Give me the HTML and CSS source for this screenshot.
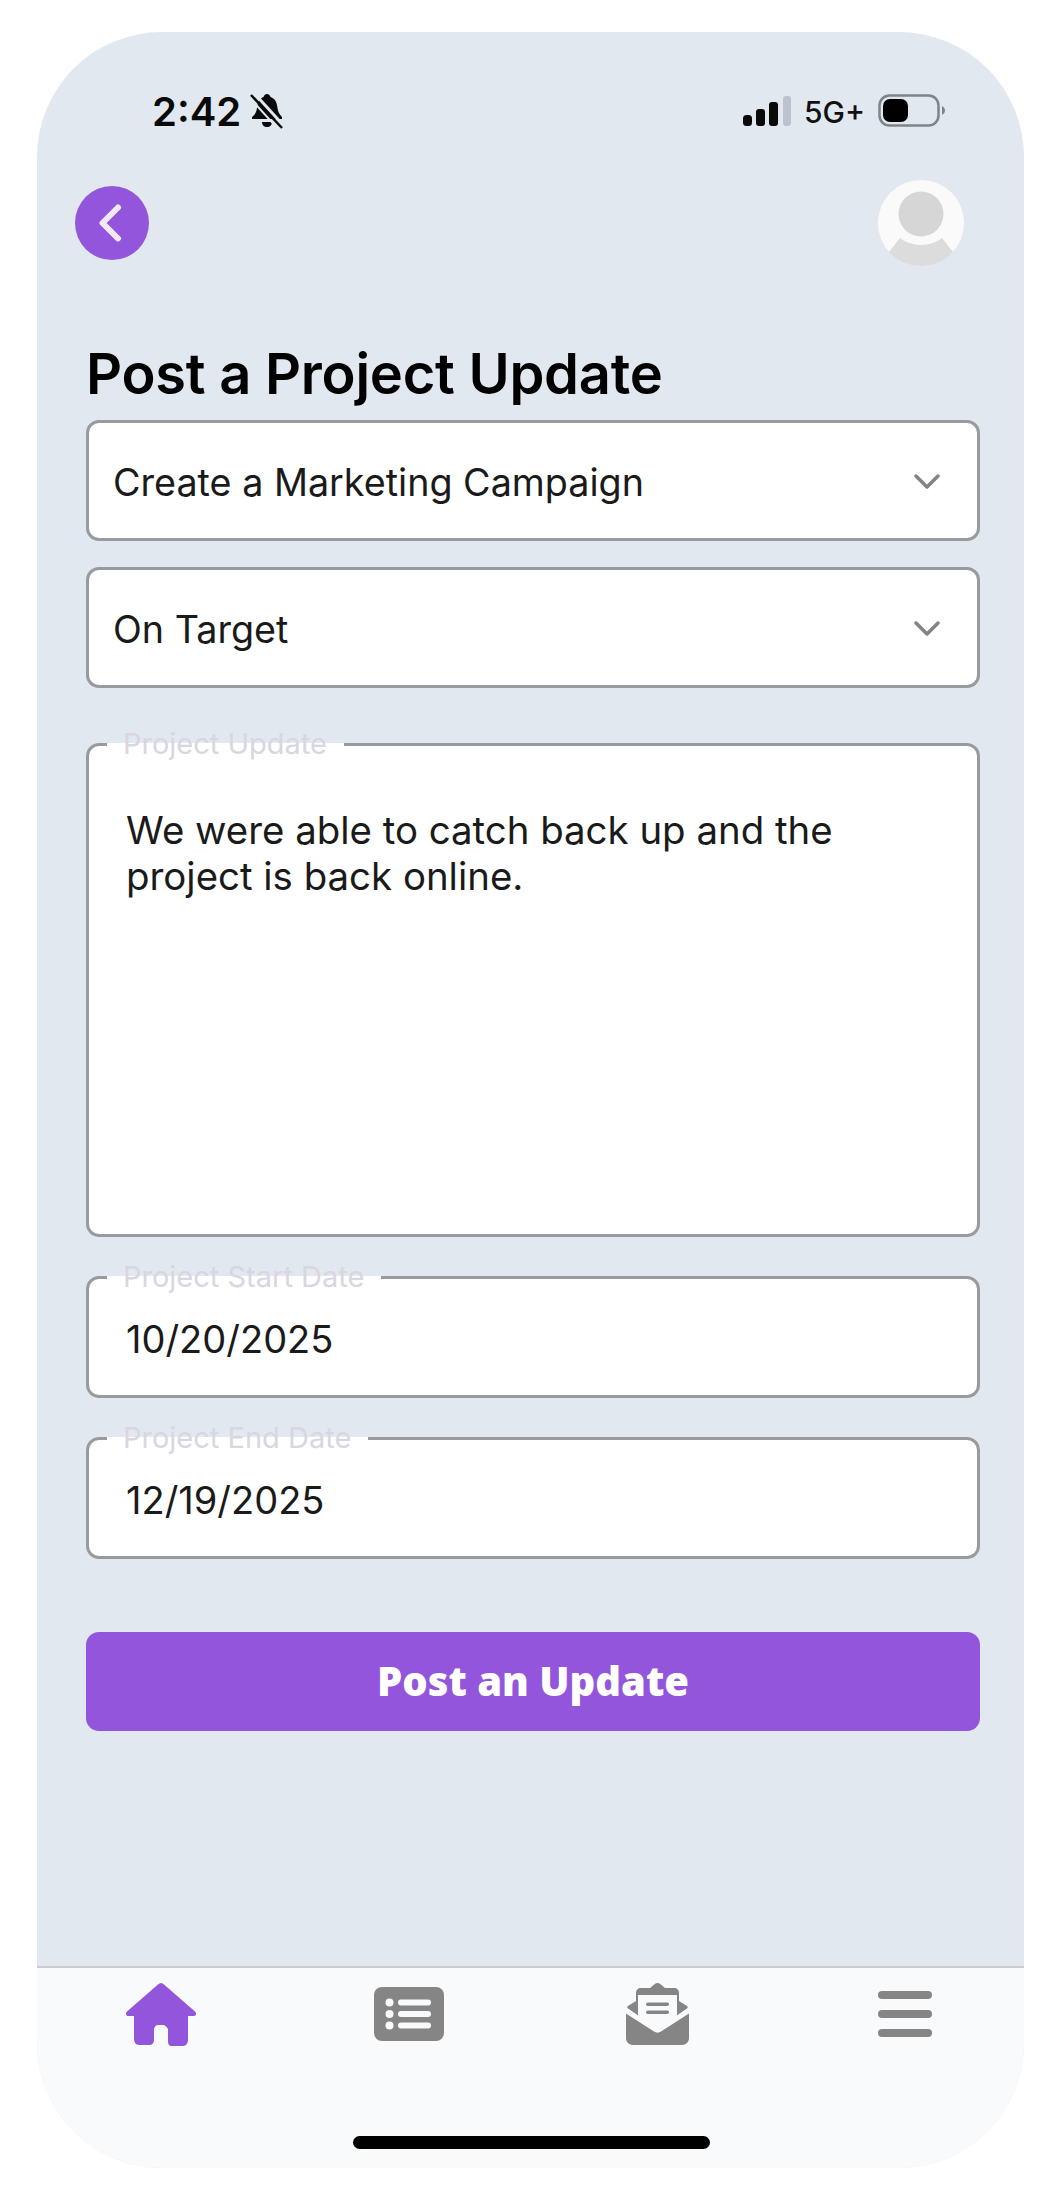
FILE: index.html
```html
<!DOCTYPE html>
<html lang="en">
<head>
    <meta charset="UTF-8">
    <meta name="viewport" content="width=device-width, initial-scale=1.0">
    <title>Post a Project Update</title>
    <link rel="stylesheet" href="styles.css">
</head>
<body>
    <div class="phone">
        <div class="status-bar">
            <div class="status-left">
                <span class="time">2:42</span>
                <svg class="bell" width="34" height="36" viewBox="0 0 34 36">
                    <path d="M17 1c2 0 3 1.500 3.500 3 5 1.500 6.500 6 7 11 .4 4 2 6.500 4.500 9v2H2v-2c3-2.500 4.500-5 5-9 .5-5 2-9.500 6.500-11C14 2.500 15 1 17 1z" fill="#0a0a0a"/>
                    <path d="M12 29h10c0 3-2 5-5 5s-5-2-5-5z" fill="#0a0a0a"/>
                    <path d="M4 0l30 33" stroke="#e1e8f0" stroke-width="3"/>
                    <path d="M1 2l31 33" stroke="#0a0a0a" stroke-width="2.500"/>
                    <path d="M-1 4l30 33" stroke="#e1e8f0" stroke-width="2"/>
                </svg>
            </div>
            <div class="status-right">
                <svg width="48" height="32" viewBox="0 0 48 32">
                    <rect x="0" y="20" width="9" height="11" rx="3.500" fill="#0a0a0a"/>
                    <rect x="13" y="14" width="9" height="17" rx="3" fill="#0a0a0a"/>
                    <rect x="26" y="7" width="9" height="24" rx="3" fill="#0a0a0a"/>
                    <rect x="40" y="1" width="8" height="30" rx="3" fill="#bcc3ce"/>
                </svg>
                <span class="network">5G+</span>
                <svg width="67" height="34" viewBox="0 0 67 34">
                    <rect x="1.500" y="1.500" width="59" height="30" rx="10" fill="none" stroke="#7f848b" stroke-width="2.500"/>
                    <rect x="5" y="5" width="25" height="23" rx="7" fill="#000"/>
                    <path d="M64 12c2 1 3 3 3 4.500s-1 3.500-3 4.500z" fill="#7f848b"/>
                </svg>
            </div>
        </div>

        <div class="top-row">
            <button class="back-btn" aria-label="Back">
                <svg width="24" height="38" viewBox="0 0 24 38">
                    <path d="M20 3.500L4.500 19 20 34.500" fill="none" stroke="#f1e9fb" stroke-width="6" stroke-linecap="round" stroke-linejoin="round"/>
                </svg>
            </button>
            <svg class="avatar" width="86" height="86" viewBox="0 0 86 86">
                <circle cx="43" cy="43" r="43" fill="#fafafa"/>
                <circle cx="43" cy="34" r="22.500" fill="#d6d6d6"/>
                <path d="M11 72l11-14c5 4 13 7 21 7s16-3 21-7l11 14c-8 9-20 14-32 14s-24-5-32-14z" fill="#dcdcdc"/>
            </svg>
        </div>

        <form class="content">
            <h1>Post a Project Update</h1>

            <div class="select-box">
                <span>Create a Marketing Campaign</span>
                <svg width="26" height="16" viewBox="0 0 26 16"><path d="M2 2l11 11L24 2" fill="none" stroke="#808387" stroke-width="3.500" stroke-linecap="round" stroke-linejoin="round"/></svg>
            </div>
            <div class="select-box second">
                <span>On Target</span>
                <svg width="26" height="16" viewBox="0 0 26 16"><path d="M2 2l11 11L24 2" fill="none" stroke="#808387" stroke-width="3.500" stroke-linecap="round" stroke-linejoin="round"/></svg>
            </div>

            <fieldset class="field field-update">
                <legend>Project Update</legend>
                <p>We were able to catch back up and the project is back online.</p>
            </fieldset>
            <fieldset class="field field-start">
                <legend>Project Start Date</legend>
                <p>10/20/2025</p>
            </fieldset>
            <fieldset class="field field-end">
                <legend>Project End Date</legend>
                <p>12/19/2025</p>
            </fieldset>

            <button type="button" class="submit-btn">Post an Update</button>
        </form>

        <nav class="tab-bar">
            <div class="tabs">
                <a class="tab">
                    <svg width="72" height="64" viewBox="0 0 72 64">
                        <path d="M36 1c1 0 2 .500 3 1.500l31 27c2 2 1 4.500-2 4.500h-5v24c0 3-2 6-5 6H47c-3 0-4-2-4-5V47c-2-3-3-4-5-4h-5c-2 0-3 1-4 4v11c0 3-2 5-5 5H14c-3 0-5-3-5-6V34H4c-3 0-4-2.500-2-4.500l31-27c1-1 2-1.500 3-1.500z" fill="#9355dc"/>
                    </svg>
                </a>
                <a class="tab">
                    <svg width="70" height="54" viewBox="0 0 70 54">
                        <rect width="70" height="54" rx="8" fill="#858585"/>
                        <circle cx="15.500" cy="15.500" r="4" fill="#f9fafc"/>
                        <circle cx="15.500" cy="27" r="4" fill="#f9fafc"/>
                        <circle cx="15.500" cy="38.500" r="4" fill="#f9fafc"/>
                        <rect x="24" y="12.500" width="33" height="6" rx="3" fill="#f9fafc"/>
                        <rect x="24" y="24" width="33" height="6" rx="3" fill="#f9fafc"/>
                        <rect x="24" y="35.500" width="33" height="6" rx="3" fill="#f9fafc"/>
                    </svg>
                </a>
                <a class="tab">
                    <svg width="63" height="62" viewBox="0 0 63 62">
                        <path d="M31.500 0c1 0 2 .500 3 1.200L39 5h9c3 0 5 2 5 5v8l8 5c1 .800 1 1.600 0 2.400L50 33H13L2 25.400c-1-.800-1-1.600 0-2.400l8-5v-8c0-3 2-5 5-5h9l4.500-3.800c1-.700 2-1.200 3-1.200z" fill="#858585"/>
                        <path d="M12 12h39v22L31.500 47 12 34z" fill="#f9fafc"/>
                        <path d="M0 27l31.500 19.500L63 27" fill="none" stroke="#f9fafc" stroke-width="2.500"/>
                        <rect x="20" y="19.500" width="23" height="3.500" rx="1.700" fill="#858585"/>
                        <rect x="20" y="27.500" width="23" height="3.500" rx="1.700" fill="#858585"/>
                        <path d="M0 30.500l28 18c2 1.500 5 1.500 7 0l28-18V55c0 4-3 7-7 7H7c-4 0-7-3-7-7z" fill="#858585"/>
                    </svg>
                </a>
                <a class="tab">
                    <div class="menu-icon"><span></span><span></span><span></span></div>
                </a>
            </div>
            <div class="home-indicator"></div>
        </nav>
    </div>
</body>
</html>
```

FILE: styles.css
```css
* {
    box-sizing: border-box;
}
body {
    margin: 0;
    background: #fff;
    font-family: Inter, "Liberation Sans", sans-serif;
}
.phone {
    width: 987px;
    height: 2136px;
    margin: 32px 0 32px 37px;
    background: #e1e8f0;
    border-radius: 125px;
    overflow: hidden;
    display: flex;
    flex-direction: column;
}
.status-bar {
    display: flex;
    justify-content: space-between;
    align-items: center;
    height: 46px;
    margin-top: 56px;
    padding: 0 79px 0 115px;
}
.status-left, .status-right {
    display: flex;
    align-items: center;
}
.time {
    font-size: 40px;
    font-weight: 600;
    color: #0a0a0a;
}
.bell {
    margin-left: 9px;
}
.network {
    font-size: 30px;
    font-weight: 500;
    color: #111;
    margin: 2px 13px 0;
}
.top-row {
    display: flex;
    justify-content: space-between;
    align-items: center;
    height: 86px;
    margin-top: 46px;
    padding: 0 60px 0 38px;
}
.back-btn {
    width: 74px;
    height: 74px;
    border: none;
    border-radius: 50%;
    background: #9355dc;
    padding: 0 4px 0 0;
    display: flex;
    align-items: center;
    justify-content: center;
}
.content {
    flex: 1;
    padding: 0 44px 0 49px;
}
h1 {
    margin: 0;
    padding-top: 73px;
    height: 154px;
    font-size: 56px;
    line-height: 70px;
    font-weight: 600;
    color: #000;
    letter-spacing: -0.25px;
}
.select-box {
    height: 121px;
    background: #fff;
    border: 3px solid #989b9e;
    border-radius: 13px;
    display: flex;
    justify-content: space-between;
    align-items: center;
    padding: 2px 37px 0 24px;
    font-size: 37.7px;
    color: #1a1a1a;
}
.select-box.second {
    margin-top: 26px;
}
.field {
    display: block;
    margin: 0;
    padding: 0 37px;
    background: #fff;
    border: 3px solid #989b9e;
    border-radius: 13px;
    min-width: 0;
}
.field legend {
    padding: 0 17px 0 16px;
    margin-left: -19px;
    font-size: 29px;
    line-height: 32px;
    color: #d9d6e2;
}
.field p {
    margin: 0;
    font-size: 38px;
    color: #1a1a1a;
}
.field-update {
    height: 509px;
    margin-top: 40px;
}
.field-update p {
    padding-top: 47px;
    font-size: 38.4px;
    line-height: 46px;
    max-width: 780px;
}
.field-start, .field-end {
    height: 137px;
}
.field-start {
    margin-top: 24px;
}
.field-end {
    margin-top: 24px;
}
.field-start p, .field-end p {
    padding-top: 23px;
    line-height: 46px;
}
.submit-btn {
    display: block;
    width: 100%;
    height: 99px;
    margin-top: 73px;
    padding: 0 0 3px;
    border: none;
    border-radius: 13px;
    background: #9355dc;
    color: #fff;
    font-family: "Open Sans", sans-serif;
    font-size: 40px;
    font-weight: 800;
}
.tab-bar {
    height: 202px;
    background: #f9fafc;
    border-top: 2px solid #c9cbce;
    position: relative;
}
.tabs {
    display: grid;
    grid-template-columns: repeat(4, 248px);
    align-items: start;
    padding-top: 14px;
}
.tab {
    display: flex;
    justify-content: center;
    height: 64px;
    align-items: center;
}
.menu-icon {
    width: 54px;
    display: flex;
    flex-direction: column;
    gap: 11px;
}
.menu-icon span {
    height: 8px;
    border-radius: 4px;
    background: #858585;
}
.home-indicator {
    position: absolute;
    left: 316px;
    bottom: 19px;
    width: 357px;
    height: 13px;
    border-radius: 7px;
    background: #000;
}
```
